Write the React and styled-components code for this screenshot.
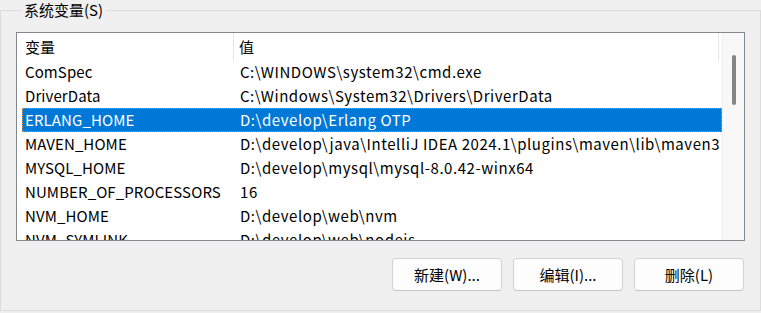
import React from "react";
import styled, { createGlobalStyle } from "styled-components";

const Global = createGlobalStyle`
  html, body { margin: 0; padding: 0; background: #f0f0f0; }
  body { font-family: "Noto Sans CJK SC", "Noto Sans", sans-serif; color: #000; }
`;

const Page = styled.div`
  width: 761px;
  height: 313px;
  overflow: hidden;
  background: #f0f0f0;
`;

const Group = styled.fieldset`
  margin: 0;
  padding: 0 15px 18px 15px;
  border: 1px solid #dcdcdc;
  width: 761px;
  height: 311px;
  box-sizing: border-box;
  display: flex;
  flex-direction: column;
`;

const Legend = styled.legend`
  margin-left: 6px;
  padding: 0 2px;
  font-size: 15px;
  line-height: 20px;
  color: #000;
`;

const ListBox = styled.div`
  margin-top: 12px;
  width: 729px;
  height: 209px;
  box-sizing: border-box;
  border: 1px solid #828790;
  background: #fff;
  display: flex;
  overflow: hidden;
`;

const ListContent = styled.div`
  flex: 1;
  display: flex;
  flex-direction: column;
  overflow: hidden;
`;

const Header = styled.div`
  height: 27px;
  flex: none;
  display: grid;
  grid-template-columns: 217px 485px 1fr;
`;

const HeaderCell = styled.div`
  font-size: 15px;
  line-height: 28px;
  padding-left: ${(p) => p.$pad}px;
  border-right: ${(p) => (p.$sep ? "1px solid #e5e5e5" : "none")};
  white-space: nowrap;
`;

const Row = styled.div`
  height: 24px;
  flex: none;
  margin-left: 5px;
  display: grid;
  grid-template-columns: 215px 1fr;
  background: ${(p) => (p.$selected ? "#0078d7" : "transparent")};
  color: ${(p) => (p.$selected ? "#fff" : "#000")};
  outline: ${(p) => (p.$selected ? "1px dotted #ff8728" : "none")};
  outline-offset: -1px;
`;

const Cell = styled.div`
  font-size: 15px;
  letter-spacing: ${(p) => p.$ls}px;
  line-height: 24px;
  padding-left: 3px;
  white-space: nowrap;
  overflow: hidden;
`;

const ScrollTrack = styled.div`
  width: 22px;
  flex: none;
  background: #f8f8f8;
  border-left: 1px solid #f0f0f0;
  box-sizing: border-box;
  display: flex;
  justify-content: center;
  padding-top: 22px;
  padding-left: 1px;
`;

const Thumb = styled.div`
  width: 4px;
  height: 50px;
  border-radius: 2px;
  background: #858585;
`;

const Buttons = styled.div`
  margin-top: 17px;
  display: flex;
  justify-content: flex-end;
  gap: 11px;
  padding-right: 1px;
`;

const Button = styled.button`
  width: 110px;
  height: 33px;
  box-sizing: border-box;
  border: 1px solid #d3d3d3;
  border-bottom-color: #c4c4c4;
  border-radius: 4px;
  background: #fdfdfd;
  font-family: "Noto Sans CJK SC", "Noto Sans", sans-serif;
  font-size: 15px;
  color: #000;
  padding: 0;
`;

const rows = [
  ["ComSpec", "C:\\WINDOWS\\system32\\cmd.exe"],
  ["DriverData", "C:\\Windows\\System32\\Drivers\\DriverData"],
  ["ERLANG_HOME", "D:\\develop\\Erlang OTP"],
  ["MAVEN_HOME", "D:\\develop\\java\\IntelliJ IDEA 2024.1\\plugins\\maven\\lib\\maven3"],
  ["MYSQL_HOME", "D:\\develop\\mysql\\mysql-8.0.42-winx64"],
  ["NUMBER_OF_PROCESSORS", "16"],
  ["NVM_HOME", "D:\\develop\\web\\nvm"],
  ["NVM_SYMLINK", "D:\\develop\\web\\nodejs"],
];

export default function App() {
  return (
    <Page>
      <Global />
      <Group>
        <Legend>系统变量(S)</Legend>
        <ListBox>
          <ListContent>
            <Header>
              <HeaderCell $pad={8} $sep>变量</HeaderCell>
              <HeaderCell $pad={5} $sep>值</HeaderCell>
              <HeaderCell $pad={0} />
            </Header>
            {rows.map(([k, v], i) => (
              <Row key={k} $selected={i === 2}>
                <Cell $ls={0.1}>{k}</Cell>
                <Cell $ls={0.55}>{v}</Cell>
              </Row>
            ))}
          </ListContent>
          <ScrollTrack>
            <Thumb />
          </ScrollTrack>
        </ListBox>
        <Buttons>
          <Button>新建(W)...</Button>
          <Button>编辑(I)...</Button>
          <Button>删除(L)</Button>
        </Buttons>
      </Group>
    </Page>
  );
}
